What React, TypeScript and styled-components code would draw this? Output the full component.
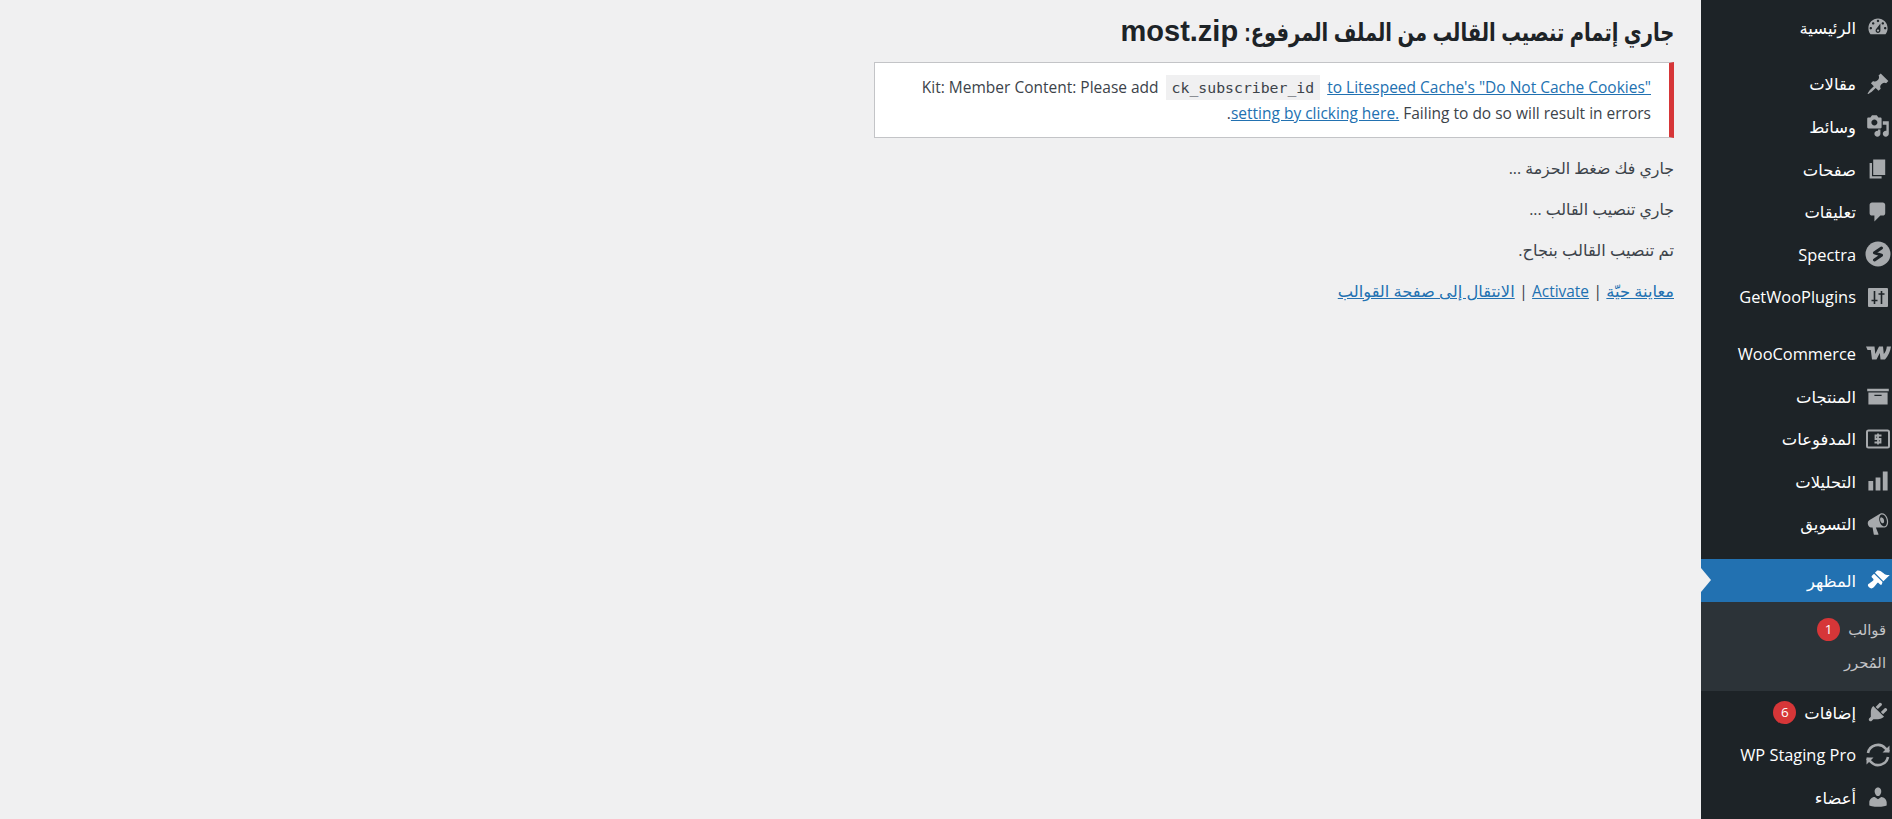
import React from "react";
import styled, { createGlobalStyle } from "styled-components";

const Global = createGlobalStyle`
  html, body { margin: 0; padding: 0; height: 100%; overflow: hidden; background: #f0f0f1; }
  #root { height: 100%; }
`;

const FONT = `"Open Sans", "DejaVu Sans", sans-serif`;

const Page = styled.div`
  display: flex;
  height: 819px;
  overflow: hidden;
  background: #f0f0f1;
  font-family: ${FONT};
  color: #3c434a;
`;
const Sidebar = styled.nav`
  flex: 0 0 191px;
  height: 819px;
  overflow: hidden;
  background: #1d2327;
  padding-top: 6px;
  box-sizing: border-box;
`;
const Group = styled.div`
  margin-bottom: 14px;
`;
const Row = styled.div<{ $active?: boolean }>`
  position: relative;
  display: flex;
  align-items: center;
  height: 42.6px;
  gap: 8px;
  color: #fff;
  font-size: 16.4px;
  white-space: nowrap;
  background: ${(p) => (p.$active ? "#2271b1" : "transparent")};
  ${(p) =>
    p.$active &&
    `&::after {
      content: "";
      position: absolute;
      left: 0;
      top: 50%;
      margin-top: -12px;
      border-style: solid;
      border-width: 12px 0 12px 10px;
      border-color: transparent transparent transparent #f0f0f1;
    }`}
`;
const IconBox = styled.span<{ $active?: boolean }>`
  flex: 0 0 28px;
  display: flex;
  align-items: center;
  justify-content: center;
  color: ${(p) => (p.$active ? "#fff" : "#a7aaad")};
`;
const Submenu = styled.div`
  background: #2c3338;
  height: 89px;
  padding-top: 11px;
  box-sizing: border-box;
`;
const SubRow = styled.div`
  display: flex;
  align-items: center;
  height: 33px;
  gap: 8px;
  padding-right: 6px;
  color: #c3c4c7;
  font-size: 14.8px;
`;
const Badge = styled.span`
  display: inline-flex;
  align-items: center;
  justify-content: center;
  width: 23px;
  height: 23px;
  border-radius: 50%;
  background: #d63638;
  color: #fff;
  font-size: 13.5px;
`;
const Main = styled.main`
  flex: 1;
  min-width: 0;
  padding: 14px 27px 0 0;
`;
const Title = styled.h1`
  margin: 0 0 12px;
  height: 36px;
  font-family: "Liberation Sans", "DejaVu Sans", sans-serif;
  font-size: 29px;
  line-height: 34px;
  font-weight: 700;
  color: #1d2327;
  white-space: nowrap;
`;
/* the only Arabic face here is wider than the reference's, so it is narrowed to the same run length */
const TitleArabic = styled.span`
  display: inline-block;
  font-size: 25px;
  transform: scaleX(0.78);
  transform-origin: right center;
  margin-left: -123.5px;
`;
const Notice = styled.div`
  width: 800px;
  height: 76px;
  box-sizing: border-box;
  background: #fff;
  border: 1px solid #c3c4c7;
  border-right: 5px solid #d63638;
  padding: 11px 18px;
  font-size: 15.5px;
  line-height: 26px;
`;
const Code = styled.code`
  font-family: "DejaVu Sans Mono", monospace;
  font-size: 14.8px;
  line-height: 1;
  background: #f0f0f1;
  padding: 4px 6px;
  margin: 0 3px;
  color: #3c434a;
`;
const Link = styled.a<{ $size?: number }>`
  color: #2271b1;
  text-decoration: underline;
  ${(p) => (p.$size ? `font-size: ${p.$size}px;` : "")}
`;
const Line = styled.p<{ $size?: number }>`
  margin: 0;
  height: 41px;
  font-size: ${(p) => p.$size ?? 15.8}px;
  line-height: 41px;
`;
const Log = styled.div`
  margin-top: 10px;
`;

const D = ({ d, size = 24 }: { d: string; size?: number }) => (
  <svg width={size} height={size} viewBox="0 0 20 20" fill="currentColor">
    <path d={d} />
  </svg>
);

const P = {
  dash: "M3.76 16h12.48c1.1-1.37 1.76-3.11 1.76-5 0-4.42-3.58-8-8-8s-8 3.58-8 8c0 1.89.66 3.63 1.76 5zM10 4c.55 0 1 .45 1 1s-.45 1-1 1-1-.45-1-1 .45-1 1-1zM6 6c.55 0 1 .45 1 1s-.45 1-1 1-1-.45-1-1 .45-1 1-1zm8 0c.55 0 1 .45 1 1s-.45 1-1 1-1-.45-1-1 .45-1 1-1zm-5.37 5.55L12 7v6c0 1.1-.9 2-2 2s-2-.9-2-2c0-.57.24-1.08.63-1.45zM4 10c.55 0 1 .45 1 1s-.45 1-1 1-1-.45-1-1 .45-1 1-1zm12 0c.55 0 1 .45 1 1s-.45 1-1 1-1-.45-1-1 .45-1 1-1zm-5 3c0-.55-.45-1-1-1s-1 .45-1 1 .45 1 1 1 1-.45 1-1z",
  pin: "M10.44 3.02l1.82-1.82 6.36 6.35-1.83 1.82c-1.05-.68-2.48-.57-3.41.36l-.75.75c-.92.93-1.04 2.35-.35 3.41l-1.83 1.82-2.41-2.41-2.8 2.79c-.42.42-3.38 2.71-3.8 2.29s1.86-3.39 2.28-3.81l2.79-2.79L4.1 9.36l1.83-1.82c1.05.69 2.48.57 3.4-.36l.75-.75c.93-.92 1.05-2.35.36-3.41z",
  media: "M13 11V4c0-.55-.45-1-1-1h-1.67L9 1H5L3.67 3H2c-.55 0-1 .45-1 1v7c0 .55.45 1 1 1h10c.55 0 1-.45 1-1zM7 4.5c1.38 0 2.5 1.12 2.5 2.5S8.38 9.5 7 9.5 4.5 8.38 4.5 7 5.62 4.5 7 4.5zM14 6h5v10.5c0 1.38-1.12 2.5-2.5 2.5S14 17.88 14 16.5s1.12-2.5 2.5-2.5c.17 0 .34.02.5.05V9h-3V6zm-4 8.05V13h2v3.5c0 1.38-1.12 2.5-2.5 2.5S7 17.88 7 16.5 8.12 14 9.5 14c.17 0 .34.02.5.05z",
  page: "M6 15V2h10v13H6zm-1 1h8v2H3V5h2v11z",
  comment: "M5 2h9c1.1 0 2 .9 2 2v7c0 1.1-.9 2-2 2h-2l-5 5v-5H5c-1.1 0-2-.9-2-2V4c0-1.1.9-2 2-2z",
  archive: "M19 4v2H1V4h18zM2 7h16v10H2V7zm11 3V9H7v1h6z",
  bars: "M18 18V2h-4v16h4zm-6 0V7H8v11h4zm-6 0v-8H2v8h4z",
  mega: "M18.15 5.94c.46 1.62.38 3.22-.02 4.48-.42 1.28-1.26 2.18-2.3 2.48-.16.06-.26.06-.4.06-.06.02-.12.02-.18.02-.06.02-.14.02-.22.02h-6.8l2.22 5.5c.02.14-.06.26-.14.34-.08.1-.24.16-.34.16H6.95c-.1 0-.26-.06-.34-.16-.08-.08-.16-.2-.14-.34l-1-5.5H4.25l-.02-.02c-.5.06-1.08-.18-1.54-.62s-.88-1.08-1.06-1.88c-.24-.8-.2-1.56-.02-2.2.18-.62.58-1.08 1.06-1.3l.02-.02 9-5.4c.1-.06.18-.1.24-.16.06-.04.14-.08.24-.12.16-.08.28-.12.5-.18 1.04-.3 2.24.1 3.22.98s1.84 2.24 2.26 3.86zm-2.58 5.98h-.02c.4-.1.74-.34 1.04-.7.58-.7.86-1.76.86-3.04 0-.64-.1-1.3-.28-1.98-.34-1.36-1.02-2.5-1.78-3.24s-1.68-1.1-2.46-.88c-.82.22-1.4.96-1.7 2-.32 1.04-.28 2.36.06 3.72.38 1.36 1 2.5 1.8 3.24.78.74 1.62 1.1 2.48.88zm-2.54-7.08c.22-.04.42-.02.62.04.38.16.76.48 1.02 1s.42 1.2.42 1.78c0 .3-.04.56-.12.8-.18.48-.44.84-.86.94-.34.1-.8-.06-1.14-.4-.34-.34-.66-.72-.9-1.3-.24-.56-.34-1.24-.34-1.66 0-.44.1-.8.24-1.04.16-.26.42-.5.76-.56h.3z",
  brush: "M14.48 11.06L7.41 3.99l1.5-1.5c.5-.56 2.3-.47 3.51.32 1.21.8 1.43 1.28 2.91 2.1 1.18.64 2.45 1.26 4.45.85zm-.71.71L6.7 4.7 4.93 6.47c-.39.39-.39 1.02 0 1.41l1.06 1.06c.39.39.39 1.03 0 1.42-.6.6-1.43 1.11-2.21 1.69-.35.26-.7.53-1.01.84C1.43 13.23 1 14.6 2.5 16.1s2.87 1.07 4.22-.27c.3-.31.57-.66.83-1 .58-.78 1.09-1.61 1.69-2.21.39-.39 1.02-.39 1.41 0l1.06 1.06c.39.39 1.02.39 1.41 0z",
  plug: "M13.11 4.36L9.87 7.6 8 5.73l3.24-3.24c.35-.34 1.05-.2 1.56.32.52.51.66 1.21.31 1.55zm-8 1.77l.91-1.12 9.01 9.01-1.19.84c-.71.71-2.63 1.16-3.82 1.16H6.14L4.9 17.26c-.59.59-1.54.59-2.12 0-.59-.58-.59-1.53 0-2.12l1.24-1.24v-3.88c0-1.13.4-3.19 1.09-3.89zm7.26 3.97l3.24-3.24c.34-.35 1.04-.21 1.55.31.52.51.66 1.21.31 1.55l-3.24 3.25z",
  user: "M10 9.25c-2.27 0-2.73-3.44-2.73-3.44C7 4.02 7.82 2 9.97 2c2.16 0 2.98 2.02 2.71 3.81 0 0-.41 3.44-2.68 3.44zm0 2.57L12.72 10c2.39 0 4.52 2.33 4.52 4.53v2.49s-3.65 1.13-7.24 1.13c-3.65 0-7.24-1.13-7.24-1.13v-2.49c0-2.25 1.94-4.48 4.47-4.48z",
};

const Spectra = () => (
  <svg width="26" height="26" viewBox="0 0 26 26">
    <circle cx="13" cy="13" r="12.5" fill="currentColor" />
    <path d="M16.5 7 9.500 11.800 16.500 14.200 9.500 19" stroke="#1d2327" strokeWidth="3" fill="none" strokeLinejoin="round" strokeLinecap="round" />
  </svg>
);
const Slider = () => (
  <svg width="22" height="22" viewBox="0 0 22 22">
    <rect x="1" y="2" width="20" height="19" rx="1" fill="currentColor" />
    <path d="M7.500 5v13M4.500 14.500h6M14.500 5v13M11.500 8h6" stroke="#1d2327" strokeWidth="1.6" fill="none" />
  </svg>
);
const Woo = () => (
  <svg width="25" height="14" viewBox="0 0 25 14">
    <path d="M0 .5H8.500L9.300 8 13 .5H17L17.800 8C19.500 6 20.500 3.500 20.800 .5H25C24.500 5 22 10 19 13.500H14.500L13.800 7 10.500 13.500H6L4.800 4H1.500Z" fill="currentColor" />
  </svg>
);
const Pay = () => (
  <svg width="24" height="20" viewBox="0 0 24 20">
    <rect x="1" y="1.500" width="22" height="17" rx="1.500" fill="none" stroke="currentColor" strokeWidth="2" />
    <path d="M15.500 6.500H9.500V10H14.500V13.500H8.500M12 4.500v11" stroke="currentColor" strokeWidth="1.800" fill="none" />
  </svg>
);
const Sync = () => (
  <svg width="26" height="26" viewBox="0 0 26 26" fill="none" stroke="currentColor" strokeWidth="2.600">
    <path d="M3 11a10 10 0 0 1 17.500-4.500L24 9.500" />
    <path d="M23 15a10 10 0 0 1-17.500 4.500L2 16.500" />
    <path d="M24.500 3.500v7h-7M1.500 22.500v-7h7" fill="currentColor" stroke="none" />
  </svg>
);

type Item = { label: string; icon: React.ReactNode; badge?: string };
const MenuRow = ({ label, icon, badge }: Item) => (
  <Row>
    <IconBox>{icon}</IconBox>
    <span>{label}</span>
    {badge && <Badge>{badge}</Badge>}
  </Row>
);

export default function App() {
  return (
    <Page dir="rtl">
      <Global />
      <Sidebar>
        <Group>
          <MenuRow label="الرئيسية" icon={<D d={P.dash} />} />
        </Group>
        <Group>
          <MenuRow label="مقالات" icon={<D d={P.pin} />} />
          <MenuRow label="وسائط" icon={<D d={P.media} />} />
          <MenuRow label="صفحات" icon={<D d={P.page} />} />
          <MenuRow label="تعليقات" icon={<D d={P.comment} />} />
          <MenuRow label="Spectra" icon={<Spectra />} />
          <MenuRow label="GetWooPlugins" icon={<Slider />} />
        </Group>
        <Group>
          <MenuRow label="WooCommerce" icon={<Woo />} />
          <MenuRow label="المنتجات" icon={<D d={P.archive} />} />
          <MenuRow label="المدفوعات" icon={<Pay />} />
          <MenuRow label="التحليلات" icon={<D d={P.bars} />} />
          <MenuRow label="التسويق" icon={<D d={P.mega} />} />
        </Group>
        <Row $active>
          <IconBox $active>
            <D d={P.brush} />
          </IconBox>
          <span>المظهر</span>
        </Row>
        <Submenu>
          <SubRow>
            <span>قوالب</span>
            <Badge>1</Badge>
          </SubRow>
          <SubRow>
            <span>المُحرر</span>
          </SubRow>
        </Submenu>
        <MenuRow label="إضافات" icon={<D d={P.plug} />} badge="6" />
        <MenuRow label="WP Staging Pro" icon={<Sync />} />
        <MenuRow label="أعضاء" icon={<D d={P.user} />} />
      </Sidebar>
      <Main>
        <Title>
          <TitleArabic>جاري إتمام تنصيب القالب من الملف المرفوع:</TitleArabic> most.zip
        </Title>
        <Notice>
          Kit: Member Content: Please add <Code>ck_subscriber_id</Code>{" "}
          <Link href="#">to Litespeed Cache's "Do Not Cache Cookies" setting by clicking here.</Link> Failing to do so will result in errors.
        </Notice>
        <Log>
          <Line>جاري فك ضغط الحزمة ...</Line>
          <Line>جاري تنصيب القالب ...</Line>
          <Line $size={16.3}>تم تنصيب القالب بنجاح.</Line>
          <Line $size={16.3}>
            <Link href="#">معاينة حيّة</Link> | <Link href="#" $size={15.4}>Activate</Link> | <Link href="#">الانتقال إلى صفحة القوالب</Link>
          </Line>
        </Log>
      </Main>
    </Page>
  );
}
